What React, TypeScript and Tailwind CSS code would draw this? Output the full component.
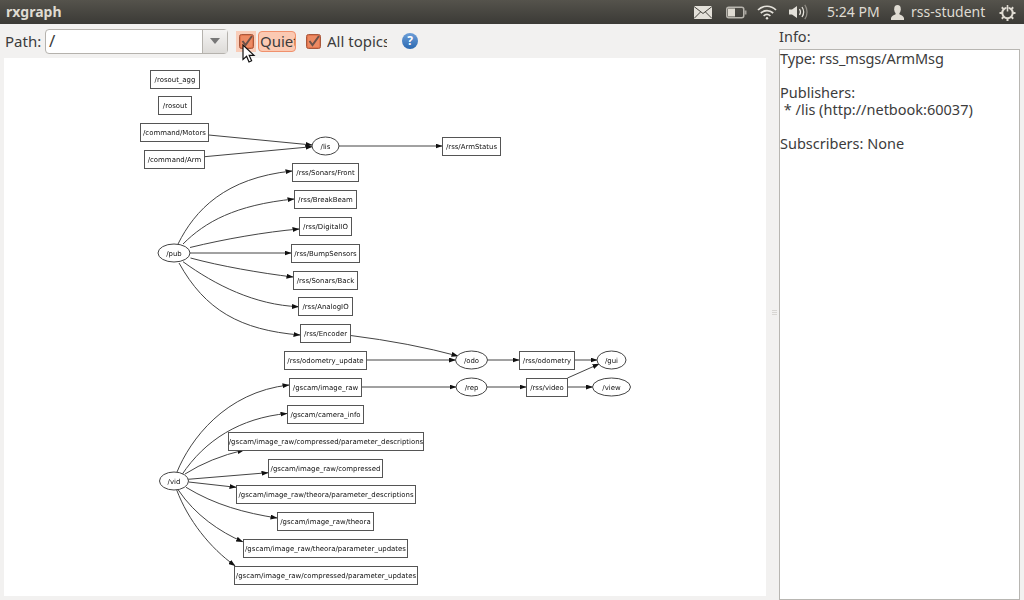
const ubuntu = { fontFamily: '"Noto Sans", "Open Sans", sans-serif' }

type Box = { label: string; x1: number; x2: number; y1: number; y2: number }
type Oval = { label: string; cx: number; cy: number; rx: number }

const boxes: Box[] = [
  { label: "/rosout_agg", x1: 150, x2: 199, y1: 70, y2: 88 },
  { label: "/rosout", x1: 158, x2: 191, y1: 96, y2: 114 },
  { label: "/command/Motors", x1: 140, x2: 208, y1: 123, y2: 141 },
  { label: "/command/Arm", x1: 144, x2: 204, y1: 150, y2: 168 },
  { label: "/rss/ArmStatus", x1: 442, x2: 500, y1: 137, y2: 155 },
  { label: "/rss/Sonars/Front", x1: 292, x2: 358, y1: 163, y2: 181 },
  { label: "/rss/BreakBeam", x1: 294, x2: 356, y1: 190, y2: 208 },
  { label: "/rss/DigitalIO", x1: 299, x2: 351, y1: 217, y2: 235 },
  { label: "/rss/BumpSensors", x1: 291, x2: 359, y1: 244, y2: 262 },
  { label: "/rss/Sonars/Back", x1: 293, x2: 357, y1: 271, y2: 289 },
  { label: "/rss/AnalogIO", x1: 298, x2: 352, y1: 297, y2: 315 },
  { label: "/rss/Encoder", x1: 300, x2: 350, y1: 324, y2: 342 },
  { label: "/rss/odometry_update", x1: 284, x2: 366, y1: 351, y2: 369 },
  { label: "/rss/odometry", x1: 519, x2: 574, y1: 351, y2: 369 },
  { label: "/gscam/image_raw", x1: 289, x2: 361, y1: 378, y2: 396 },
  { label: "/rss/video", x1: 526, x2: 567, y1: 378, y2: 396 },
  { label: "/gscam/camera_info", x1: 287, x2: 363, y1: 405, y2: 423 },
  { label: "/gscam/image_raw/compressed/parameter_descriptions", x1: 228, x2: 423, y1: 432, y2: 450 },
  { label: "/gscam/image_raw/compressed", x1: 268, x2: 382, y1: 459, y2: 477 },
  { label: "/gscam/image_raw/theora/parameter_descriptions", x1: 236, x2: 415, y1: 485, y2: 503 },
  { label: "/gscam/image_raw/theora", x1: 277, x2: 373, y1: 512, y2: 530 },
  { label: "/gscam/image_raw/theora/parameter_updates", x1: 243, x2: 407, y1: 539, y2: 557 },
  { label: "/gscam/image_raw/compressed/parameter_updates", x1: 234, x2: 417, y1: 566, y2: 584 },
]

const ovals: Oval[] = [
  { label: "/lis", cx: 325.5, cy: 146, rx: 13.5 },
  { label: "/pub", cx: 174, cy: 253, rx: 16 },
  { label: "/odo", cx: 471.5, cy: 360, rx: 16 },
  { label: "/gui", cx: 611.5, cy: 360, rx: 14.5 },
  { label: "/rep", cx: 471.5, cy: 387, rx: 15.5 },
  { label: "/view", cx: 611.5, cy: 387, rx: 19 },
  { label: "/vid", cx: 174, cy: 481, rx: 14.5 },
]

const edges: string[] = [
  "M208.7,135 L312,145",
  "M204.7,156.7 L312,146.7",
  "M339,146 L442,146",
  "M178,244 C195,210 225,178 292,171",
  "M183,244 C205,222 235,205 294,199",
  "M190,247.5 C225,239 265,232 299,229",
  "M190,253 L291,253",
  "M190.5,258 C220,266 260,273 293,277",
  "M183,261.7 C215,285 255,305 298.5,306.7",
  "M179,263 C205,310 240,330 300,335",
  "M350.7,335.5 Q410,343 458,356",
  "M366,360 L455.5,360",
  "M487.5,360 L519,360",
  "M574.5,360 L597,360",
  "M361,387 L456,387",
  "M487,387 L526,387",
  "M567.5,387 L592.5,387",
  "M567.5,378 L599,364",
  "M177,472 C190,440 225,392 289,385",
  "M181.7,475 C205,440 240,418 287,413.5",
  "M185,474 Q210,458 244,450",
  "M188,479.3 L268,472.7",
  "M188.7,482 L236,487.3",
  "M186,487.3 C215,505 245,513 277,518",
  "M178.3,490 C195,515 220,532 242.7,541.7",
  "M176.7,490 C188,520 210,548 235,565.7",
]

function GraphView() {
  return (
    <svg width="762" height="538" viewBox="4 58 762 538" className="block bg-white blur-[0.35px]">
      <defs>
        <marker id="head" markerWidth="7" markerHeight="5" refX="6.5" refY="2.5" orient="auto" markerUnits="userSpaceOnUse">
          <path d="M0,0 L7,2.5 L0,5 Z" fill="#111" />
        </marker>
      </defs>
      {edges.map((d, i) => (
        <path key={i} d={d} fill="none" stroke="#444" strokeWidth="1" markerEnd="url(#head)" />
      ))}
      {boxes.map((b) => (
        <g key={b.label}>
          <rect x={b.x1 + 0.5} y={b.y1 + 0.5} width={b.x2 - b.x1} height={b.y2 - b.y1} fill="white" stroke="#555" />
          <text
            x={(b.x1 + b.x2 + 1) / 2}
            y={(b.y1 + b.y2) / 2 + 3.2}
            textAnchor="middle"
            fontSize="6.95"
            fill="#111"
            fontFamily="DejaVu Sans"
          >
            {b.label}
          </text>
        </g>
      ))}
      {ovals.map((o) => (
        <g key={o.label}>
          <ellipse cx={o.cx} cy={o.cy} rx={o.rx} ry="9" fill="white" stroke="#444" strokeWidth="1" />
          <text x={o.cx} y={o.cy + 2.7} textAnchor="middle" fontSize="6.95" fill="#111" fontFamily="DejaVu Sans">
            {o.label}
          </text>
        </g>
      ))}
    </svg>
  )
}

function MailIcon() {
  return (
    <svg width="18" height="13" viewBox="0 0 18 13">
      <rect width="18" height="13" fill="#e4e1da" />
      <path d="M0,0.5 L9,7.5 L18,0.5 M0,12.5 L6.5,6 M18,12.5 L11.5,6" fill="none" stroke="#45433d" strokeWidth="1" />
    </svg>
  )
}

function BatteryIcon() {
  return (
    <svg width="21" height="13" viewBox="0 0 21 13">
      <rect x="0.75" y="1.25" width="17" height="10.5" rx="2" fill="none" stroke="#b8b5ae" strokeWidth="1.5" />
      <rect x="2" y="2.5" width="7" height="8" fill="#dfdbd2" />
      <rect x="18.5" y="4.5" width="2" height="4" fill="#a5a29b" />
    </svg>
  )
}

function WifiIcon() {
  return (
    <svg width="20" height="15" viewBox="0 0 20 15" fill="none" stroke="#e4e1da" strokeWidth="1.7">
      <path d="M1,5 C6,0 14,0 19,5" />
      <path d="M3.8,8 C7.5,4.7 12.5,4.7 16.2,8" />
      <path d="M6.6,10.8 C8.5,9.3 11.5,9.3 13.4,10.8" />
      <circle cx="10" cy="13.3" r="1.2" fill="#e4e1da" stroke="none" />
    </svg>
  )
}

function VolumeIcon() {
  return (
    <svg width="20" height="16" viewBox="0 0 20 16" fill="none" strokeWidth="1.3">
      <path d="M0,5.5 H3 L8,2 V14 L3,10.5 H0 Z" fill="#e4e1da" />
      <path d="M10.5,5 C11.7,6.8 11.7,9.2 10.5,11" stroke="#e4e1da" />
      <path d="M13,3 C15,6 15,10 13,13" stroke="#e4e1da" />
      <path d="M15.8,0.8 C18.8,5 18.8,11 15.8,15.2" stroke="#8e8b84" />
    </svg>
  )
}

function UserIcon() {
  return (
    <svg width="13" height="15" viewBox="0 0 13 15">
      <ellipse cx="6.5" cy="4.2" rx="3.3" ry="4.2" fill="#dfdbd2" />
      <path d="M4.8,7.5 H8.2 L8.6,9.6 C10.5,10.4 12.4,11 13,13 V15 H0 V13 C0.6,11 2.5,10.4 4.4,9.6 Z" fill="#dfdbd2" />
    </svg>
  )
}

function GearIcon() {
  return (
    <svg width="17" height="17" viewBox="0 0 17 17" fill="none" stroke="#dfdbd2">
      <circle cx="8.5" cy="9" r="5.2" strokeWidth="2" />
      <path d="M8.5,0.5 V8" strokeWidth="2" stroke="#47453f" />
      <path d="M8.5,1 V7.5" strokeWidth="1.6" />
      <path d="M8.5,14 V17 M0.5,9 H3 M14,9 H16.5 M2.8,3.3 L4.6,5.1 M14.2,3.3 L12.4,5.1 M2.8,14.7 L4.6,12.9 M14.2,14.7 L12.4,12.9" strokeWidth="2" />
    </svg>
  )
}

function CheckBox() {
  return (
    <svg width="15" height="15" viewBox="0 0 15 15">
      <rect x="0.5" y="0.5" width="14" height="14" rx="2" fill="#e2764e" stroke="#a9583c" />
      <rect x="2" y="2" width="11" height="11" rx="1" fill="#ec8a63" />
      <path d="M3.5,7 L6.5,11 L13,2" fill="none" stroke="#6b5149" strokeWidth="2" />
    </svg>
  )
}

export default function App() {
  return (
    <div className="relative flex h-[600px] w-[1024px] flex-col overflow-hidden bg-[#f2f1f0] text-[#3c3c3c]" style={ubuntu}>
      {/* Top panel */}
      <div className="flex h-6 shrink-0 items-center bg-gradient-to-b from-[#55534c] to-[#3b3a36] text-[#dfdbd2]">
        <span className="ml-1.5 text-sm font-bold">rxgraph</span>
        <div className="ml-auto flex items-center">
          <MailIcon />
          <div className="ml-3.5"><BatteryIcon /></div>
          <div className="ml-2.5"><WifiIcon /></div>
          <div className="ml-3"><VolumeIcon /></div>
          <span className="ml-[18px] w-[52px] whitespace-nowrap text-sm">5:24 PM</span>
          <div className="ml-3"><UserIcon /></div>
          <span className="ml-[7px] w-[75px] whitespace-nowrap text-sm">rss-student</span>
          <div className="ml-[13px] mr-2"><GearIcon /></div>
        </div>
      </div>

      <div className="flex min-h-0 flex-1">
        {/* Graph side */}
        <div className="flex w-[770px] shrink-0 flex-col">
          <div className="flex h-[34px] shrink-0 items-center pl-[5px] text-[15px]">
            <span className="w-10">Path:</span>
            <div className="flex h-[25px] w-[183px] rounded border border-[#b5b2ad] bg-white">
              <span className="flex-1 pl-[3px] text-[17px] leading-[22px]">/</span>
              <div className="flex w-[25px] items-center justify-center border-l border-[#b5b2ad] bg-gradient-to-b from-[#f5f4f3] to-[#dddbd8]">
                <div className="h-0 w-0 border-x-[5px] border-t-[6px] border-x-transparent border-t-[#777]" />
              </div>
            </div>
            <div className="ml-2 flex h-[21px] w-5 items-center justify-center bg-[#f9cdb9]">
              <CheckBox />
            </div>
            <div className="ml-0.5 flex h-[21px] w-[38px] items-center overflow-hidden rounded border border-[#f0906c] bg-[#fbc9b2] pl-[1px]">
              <span>Quiet</span>
            </div>
            <div className="ml-2.5"><CheckBox /></div>
            <span className="ml-1.5 w-[60px] overflow-hidden whitespace-nowrap">All topics</span>
            <div className="ml-[15px] flex h-4 w-4 items-center justify-center rounded-full bg-gradient-to-b from-[#6d9fd8] to-[#2a68b0] text-xs font-bold text-white">
              ?
            </div>
          </div>
          <div className="ml-1"><GraphView /></div>
        </div>

        {/* Sash */}
        <div className="flex w-[9px] shrink-0 flex-col items-center justify-center gap-px">
          <div className="h-px w-[5px] bg-[#d8d6d3]" />
          <div className="h-px w-[5px] bg-[#d8d6d3]" />
          <div className="h-px w-[5px] bg-[#d8d6d3]" />
        </div>

        {/* Info side */}
        <div className="flex w-[241px] shrink-0 flex-col">
          <div className="h-[25px] pt-[3px] text-[14.5px] leading-[18px]">Info:</div>
          <div className="flex-1 border border-[#b8b6b2] bg-white text-[14.5px] leading-[17px]">
            <div className="tracking-[-0.1px]">Type: rss_msgs/ArmMsg</div>
            <div className="h-[17px]" />
            <div>Publishers:</div>
            <div className="whitespace-pre"> * /lis (http://netbook:60037)</div>
            <div className="h-[17px]" />
            <div>Subscribers: None</div>
          </div>
        </div>
      </div>

      {/* Mouse pointer */}
      <svg width="14" height="20" viewBox="0 0 14 20" className="absolute left-[242px] top-[44px]">
        <path d="M1,1 V15.5 L4.6,12.3 L7,18 L9.6,16.8 L7.2,11.4 H12 Z" fill="white" stroke="#111" strokeWidth="1.2" />
      </svg>
    </div>
  )
}
